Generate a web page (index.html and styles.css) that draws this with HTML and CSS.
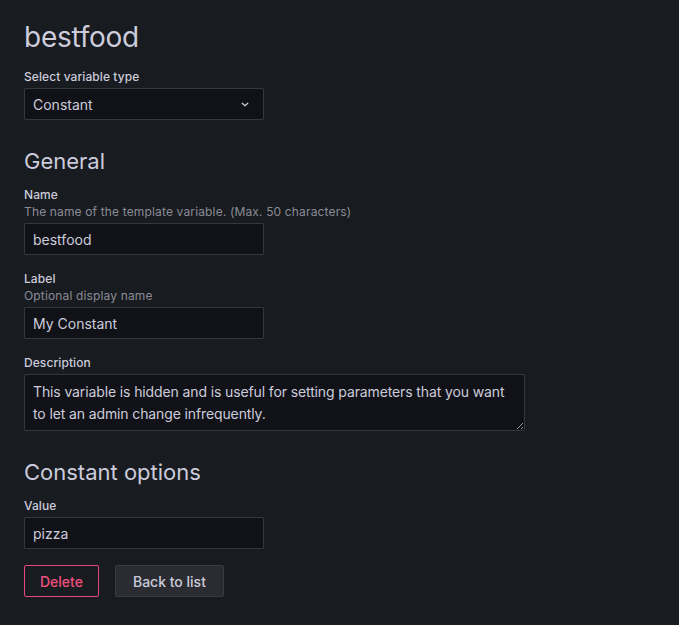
FILE: index.html
```html
<!DOCTYPE html>
<html lang="en">
<head>
<meta charset="utf-8">
<title>bestfood</title>
<link rel="stylesheet" href="styles.css">
</head>
<body>
<main class="page">
  <h1 class="title">bestfood</h1>

  <div class="field">
    <div class="label">Select variable type</div>
    <div class="select">
      <span>Constant</span>
      <svg class="chevron" width="8" height="5" viewBox="0 0 8 5"><path d="M1.2 1.2 L4 3.8 L6.8 1.2" fill="none" stroke="#ccccdc" stroke-width="1.2" stroke-linecap="round" stroke-linejoin="round"/></svg>
    </div>
  </div>

  <h3 class="section">General</h3>

  <div class="field">
    <div class="label">Name</div>
    <div class="desc">The name of the template variable. (Max. 50 characters)</div>
    <input class="input" type="text" value="bestfood">
  </div>

  <div class="field">
    <div class="label">Label</div>
    <div class="desc">Optional display name</div>
    <input class="input" type="text" value="My Constant">
  </div>

  <div class="field">
    <div class="label">Description</div>
    <textarea class="textarea">This variable is hidden and is useful for setting parameters that you want to let an admin change infrequently.</textarea>
  </div>

  <h3 class="section">Constant options</h3>

  <div class="field">
    <div class="label">Value</div>
    <input class="input" type="text" value="pizza">
  </div>

  <div class="actions">
    <button class="btn btn-danger">Delete</button>
    <button class="btn btn-secondary">Back to list</button>
  </div>
</main>
</body>
</html>
```

FILE: styles.css
```css
html, body {
  margin: 0;
  padding: 0;
  background: #181b1f;
}

body {
  font-family: Inter, "Noto Sans", sans-serif;
  color: #ccccdc;
  font-size: 14px;
}

.page {
  padding: 21px 24px 24px 24px;
  display: flex;
  flex-direction: column;
  align-items: flex-start;
}

.title {
  margin: 0 0 16px 0;
  font-size: 28px;
  line-height: 32px;
  font-weight: 400;
  letter-spacing: -0.25px;
  color: #ccccdc;
}

.section {
  margin: 11px 0 12px 0;
  font-size: 22px;
  line-height: 28px;
  font-weight: 400;
  color: #ccccdc;
}

.field {
  display: flex;
  flex-direction: column;
  margin-bottom: 16px;
}

.label {
  font-size: 12px;
  line-height: 15px;
  font-weight: 500;
  letter-spacing: 0.08px;
  color: #ccccdc;
  margin-bottom: 4px;
}

.desc {
  font-size: 12px;
  line-height: 15px;
  font-weight: 400;
  letter-spacing: 0.15px;
  color: rgba(204, 204, 220, 0.65);
  margin-top: -2px;
  margin-bottom: 4px;
}

.select,
.input {
  box-sizing: border-box;
  width: 240px;
  height: 32px;
  background: #111217;
  border: 1px solid rgba(204, 204, 220, 0.2);
  border-radius: 2px;
  color: #ccccdc;
  font-family: Inter, "Noto Sans", sans-serif;
  font-size: 14px;
  padding: 0 8px;
  margin: 0;
}

.input {
  outline: none;
}

.select {
  display: flex;
  align-items: center;
  justify-content: space-between;
  padding-right: 14px;
}

.chevron {
  display: block;
}

.textarea {
  box-sizing: border-box;
  width: 501px;
  height: 57px;
  background: #111217;
  border: 1px solid rgba(204, 204, 220, 0.2);
  border-radius: 2px;
  color: #ccccdc;
  font-family: Inter, "Noto Sans", sans-serif;
  font-size: 14px;
  line-height: 21.5px;
  letter-spacing: -0.12px;
  padding: 6px 8px;
  margin: 0;
  resize: vertical;
  outline: none;
  color-scheme: dark;
}

.actions {
  display: flex;
  gap: 16px;
}

.btn {
  box-sizing: border-box;
  height: 32px;
  font-family: Inter, "Noto Sans", sans-serif;
  font-size: 14px;
  font-weight: 500;
  border-radius: 2px;
  cursor: pointer;
}

.btn-danger {
  padding: 0 15px;
  background: transparent;
  border: 1px solid #e8457a;
  color: #f0507f;
}

.btn-secondary {
  padding: 0 17px;
  background: #2a2c32;
  border: 1px solid rgba(204, 204, 220, 0.1);
  color: #ccccdc;
}
```
